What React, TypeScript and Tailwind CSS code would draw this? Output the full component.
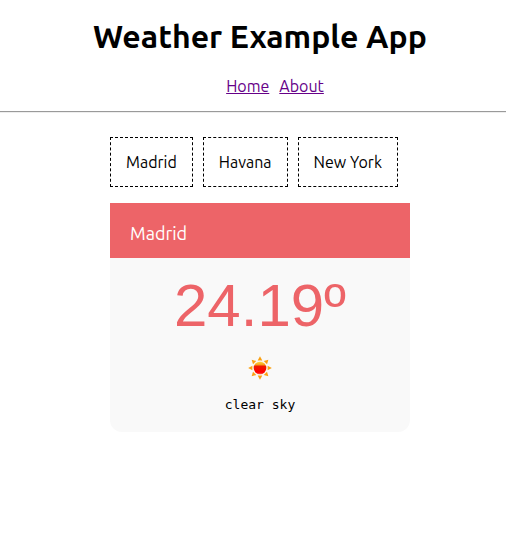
const cities = ['Madrid', 'Havana', 'New York'];

const rays = [0, 45, 90, 135, 180, 225, 270, 315];

function SunIcon() {
  return (
    <svg viewBox="0 0 24 24" className="size-6" role="img" aria-label="Sun">
      <defs>
        <linearGradient id="sun" x1="0" y1="0" x2="0" y2="1">
          <stop offset="0" stopColor="#ffd83a" />
          <stop offset="0.24" stopColor="#f7a01c" />
          <stop offset="0.36" stopColor="#f01800" />
          <stop offset="0.84" stopColor="#ff0000" />
          <stop offset="1" stopColor="#ff5a50" />
        </linearGradient>
      </defs>
      {rays.map((angle) => (
        <path key={angle} d="M12 0.2 L14.3 4.4 H9.7 Z" fill="#fba010" transform={`rotate(${angle} 12 12)`} />
      ))}
      <circle cx="12" cy="12" r="7.2" fill="#fdf3e2" />
      <circle cx="12" cy="12" r="6.3" fill="url(#sun)" />
    </svg>
  );
}

export default function App() {
  return (
    <div className="bg-white font-[Ubuntu,'Noto_Sans',sans-serif] text-base text-black">
      <header className="border-b border-[#9a9a9a] pt-4 pb-[11px] pl-3.5 text-center">
        <h1 className="text-[32px] leading-10 font-bold">Weather Example App</h1>
        <nav className="mt-4 flex justify-center gap-2.5 pl-[30px] leading-7 text-[#551a8b]">
          <a className="text-[#660088] underline" href="#home">Home</a>
          <a className="text-[#660088] underline" href="#about">About</a>
        </nav>
      </header>
      <main className="border-t border-[#eeeeee] pt-6 pl-3.5">
        <div className="mx-auto w-[300px]">
          <div className="flex gap-2.5">
            {cities.map((city) => (
              <button key={city} type="button" className="h-[50px] border border-dashed border-black px-[15px] whitespace-nowrap">
                {city}
              </button>
            ))}
          </div>
          <section className="mt-4 overflow-hidden rounded-b-[12px] bg-[#f9f9f9] text-center">
            <h2 className="bg-[#ed6468] px-5 pt-[19px] pb-[13px] text-left text-lg leading-[23px] text-white">Madrid</h2>
            <p className="pt-3 font-['Liberation_Sans',Arial,sans-serif] text-[60px] leading-[72px] text-[#ed6468]">24.19º</p>
            <div className="mt-3.5 flex justify-center">
              <SunIcon />
            </div>
            <p className="pt-[17px] pb-[19px] font-['DejaVu_Sans_Mono',monospace] text-[13px] leading-4">clear sky</p>
          </section>
        </div>
      </main>
    </div>
  );
}
